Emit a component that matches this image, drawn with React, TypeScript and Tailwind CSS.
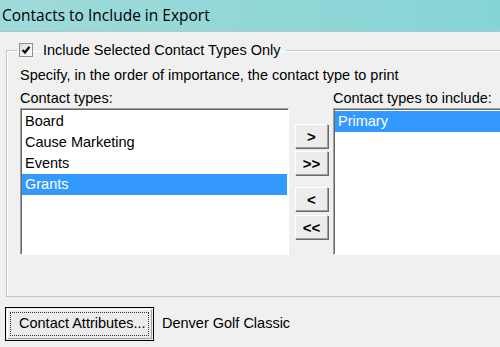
const available = ["Board", "Cause Marketing", "Events", "Grants"];
const included = ["Primary"];

function ListBox({ items, selected, className }: { items: string[]; selected: string; className: string }) {
  return (
    <div
      className={`h-[147px] shrink-0 border border-t-[#a0a0a0] border-l-[#a0a0a0] border-b-white border-r-white bg-white p-px shadow-[inset_1px_1px_0_#696969] ${className}`}
    >
      <ul className="pt-px">
        {items.map((it) => (
          <li
            key={it}
            className={`h-[21px] pl-[3px] leading-[21px] ${
              it === selected ? "bg-[#3399ff] text-white" : "text-black"
            }`}
          >
            {it}
          </li>
        ))}
      </ul>
    </div>
  );
}

function MoveButton({ label, className }: { label: string; className?: string }) {
  return (
    <button
      className={`flex h-[24px] w-[33px] items-center justify-center border border-t-white border-l-white border-b-[#a0a0a0] border-r-[#a0a0a0] bg-[#ececec] text-[15px] font-bold leading-none text-black shadow-[1px_1px_0_#696969] ${className ?? ""}`}
    >
      {label}
    </button>
  );
}

export default function App() {
  return (
    <div className="h-[347px] w-[500px] overflow-hidden bg-[#f0f0f0] font-['Liberation_Sans',Arial,sans-serif] text-[14.5px] text-black">
      {/* title bar */}
      <div className="flex h-[32px] items-center border-b border-[#b4c6c6] bg-gradient-to-r from-[#9fdada] to-[#85d4d5] pl-[2px]">
        <span className="font-['Open_Sans',sans-serif] text-[15.5px] text-black">
          Contacts to Include in Export
        </span>
      </div>

      <div className="pl-[6px]">
        <fieldset className="mt-[10px] w-[520px] border border-[#c4c4c4] pb-[41px] pl-[13px] shadow-[inset_1px_1px_0_#fff]">
          <legend className="-ml-[3px] px-[2px]">
            <span className="flex h-[16px] items-center pr-[3px]">
              <span className="flex h-[14px] w-[14px] items-center justify-center border border-[#8f8f8f] bg-gradient-to-br from-[#dcdcdc] to-white">
                <svg width="10" height="10" viewBox="0 0 10 10">
                  <path d="M1.5 5 L4 7.5 L8.5 1.8" fill="none" stroke="#111" strokeWidth="2.4" />
                </svg>
              </span>
              <span className="ml-[10px] leading-[16px]">Include Selected Contact Types Only</span>
            </span>
          </legend>

          <p className="mt-[9px] leading-[16px]">
            Specify, in the order of importance, the contact type to print
          </p>

          <div className="mt-[7px] flex leading-[16px]">
            <span className="w-[313px]">Contact types:</span>
            <span>Contact types to include:</span>
          </div>

          <div className="mt-[2px] flex items-start">
            <ListBox items={available} selected="Grants" className="w-[269px]" />
            <div className="ml-[6px] flex flex-col pt-[16px]">
              <MoveButton label=">" />
              <MoveButton label=">>" className="mt-[3px]" />
              <MoveButton label="<" className="mt-[12px]" />
              <MoveButton label="<<" className="mt-[4px]" />
            </div>
            <ListBox items={included} selected="Primary" className="ml-[5px] w-[220px]" />
          </div>
        </fieldset>
      </div>

      <div className="mt-[10px] flex items-center pl-[5px]">
        <button className="h-[34px] w-[149px] border border-black bg-[#ececec] p-px">
          <span className="flex h-full w-full items-center border border-t-white border-l-white border-b-[#a0a0a0] border-r-[#a0a0a0] p-[2px]">
            <span className="flex h-full w-full items-center border border-dotted border-[#333] pl-[8px]">
              Contact Attributes...
            </span>
          </span>
        </button>
        <span className="ml-[8px]">Denver Golf Classic</span>
      </div>
    </div>
  );
}
